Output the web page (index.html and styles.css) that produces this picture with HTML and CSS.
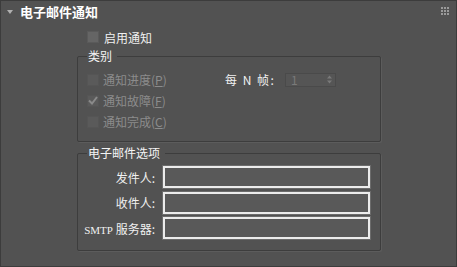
FILE: index.html
```html
<!DOCTYPE html>
<html lang="zh">
  <head>
    <meta charset="UTF-8" />
    <title>电子邮件通知</title>
    <link rel="stylesheet" href="styles.css">
  </head>
  <body>
    <div class="panel">
      <div class="header">
        <span class="arrow"></span>
        <span class="title">电子邮件通知</span>
        <span class="grip">
          <i></i><i></i><i></i><i></i><i></i><i></i><i></i><i></i><i></i>
        </span>
      </div>
      <div class="content">
        <div class="enableRow">
          <span class="check"></span>
          <span>启用通知</span>
        </div>

        <fieldset class="group categories">
          <legend>类别</legend>
          <div class="catRow">
            <span class="check disabled"></span>
            <span class="catLabel">通知进度(<u>P</u>)</span>
            <span class="everyLabel">每 N 帧:</span>
            <span class="spinner">
              <span>1</span>
              <span class="arrows">
                <svg width="5" height="9" viewBox="0 0 5 9">
                  <path d="M2.5 0.5 L5 3.5 L0 3.5 Z M2.5 8.5 L5 5.5 L0 5.5 Z" fill="#7a7a7a" />
                </svg>
              </span>
            </span>
          </div>
          <div class="catRow">
            <span class="check disabled">
              <svg width="10" height="9" viewBox="0 0 10 9">
                <path d="M1 4.5 L4 7.5 L9 1" stroke="#8a8a8a" stroke-width="2" fill="none" />
              </svg>
            </span>
            <span class="catLabel">通知故障(<u>F</u>)</span>
          </div>
          <div class="catRow">
            <span class="check disabled"></span>
            <span class="catLabel">通知完成(<u>C</u>)</span>
          </div>
        </fieldset>

        <fieldset class="group options">
          <legend>电子邮件选项</legend>
          <div class="fieldRow">
            <span class="fieldLabel">发件人:</span>
            <input class="field" />
          </div>
          <div class="fieldRow">
            <span class="fieldLabel">收件人:</span>
            <input class="field" />
          </div>
          <div class="fieldRow">
            <span class="fieldLabel"><span class="latin">SMTP</span> 服务器:</span>
            <input class="field" />
          </div>
        </fieldset>
      </div>
    </div>
  </body>
</html>
```

FILE: styles.css
```css
body {
  margin: 0;
  background-color: #525252;
  font-family: "Noto Sans CJK SC", "DejaVu Sans", sans-serif;
  font-size: 12px;
  color: #f0f0f0;
}
.panel {
  box-sizing: border-box;
  width: 457px;
  height: 267px;
  border: 1px solid #3c3c3c;
  background-color: #525252;
}
.header {
  display: flex;
  align-items: center;
  height: 21px;
  padding-left: 6px;
}
.arrow {
  width: 0;
  height: 0;
  border-left: 3px solid transparent;
  border-right: 3px solid transparent;
  border-top: 4px solid #b0b0b0;
  margin-right: 7px;
}
.title {
  font-size: 13px;
  font-weight: bold;
  color: #ffffff;
  line-height: 14px;
}
.grip {
  margin-left: auto;
  margin-right: 7px;
  display: grid;
  grid-template-columns: repeat(3, 2px);
  gap: 1px;
  margin-top: -1px;
}
.grip i {
  width: 2px;
  height: 2px;
  background-color: #9a9a9a;
}
.content {
  width: 304px;
  margin-left: 76px;
}
.enableRow {
  display: flex;
  align-items: center;
  gap: 5px;
  height: 22px;
  margin-top: 4px;
  padding-left: 10px;
}
.check {
  box-sizing: border-box;
  width: 12px;
  height: 12px;
  background-color: #656565;
  border: 1px solid #5a5a5a;
  display: flex;
  align-items: center;
  justify-content: center;
}
.check.disabled {
  background-color: #5a5a5a;
  border-color: #555555;
}
.group {
  border: 1px solid #3d3d3d;
  border-radius: 2px;
  margin: 0;
  padding: 0 0 0 9px;
  box-shadow: 1px 1px 0 #5c5c5c;
}
.group legend {
  padding: 0 5px 0 1px;
  line-height: 14px;
  color: #f4f4f4;
}
.categories {
  margin-top: 1px;
  padding-top: 6px;
  padding-bottom: 9px;
}
.catRow {
  display: flex;
  align-items: center;
  height: 21px;
  color: #8c8c8c;
}
.catLabel {
  margin-left: 4px;
  width: 122px;
}
.catLabel u {
  text-decoration-color: #8c8c8c;
}
.everyLabel {
  color: #f0f0f0;
  width: 60px;
  white-space: pre;
  letter-spacing: 1.5px;
}
.spinner {
  box-sizing: border-box;
  width: 51px;
  height: 14px;
  display: flex;
  align-items: center;
  justify-content: space-between;
  padding: 0 3px 0 5px;
  border: 1px solid #4a4a4a;
  background-color: #555555;
  color: #7a7a7a;
  line-height: 12px;
}
.arrows {
  display: flex;
}
.options {
  margin-top: 4px;
  padding: 6px 0 11px 0;
  display: flex;
  flex-direction: column;
}
.options legend {
  margin-left: 9px;
}
.fieldRow {
  display: flex;
  align-items: center;
  height: 22px;
  margin-bottom: 3.5px;
}
.fieldRow:last-child {
  margin-bottom: 0;
}
.fieldLabel {
  width: 77px;
  text-align: right;
  margin-right: 8px;
  color: #f0f0f0;
}
.latin {
  font-family: "Liberation Serif", serif;
  font-size: 11px;
}
.field {
  box-sizing: border-box;
  width: 207px;
  height: 22px;
  border: 2px solid #ececec;
  background-color: #595959;
  outline: 1px solid #6c6c6c;
  padding: 0;
}
```
